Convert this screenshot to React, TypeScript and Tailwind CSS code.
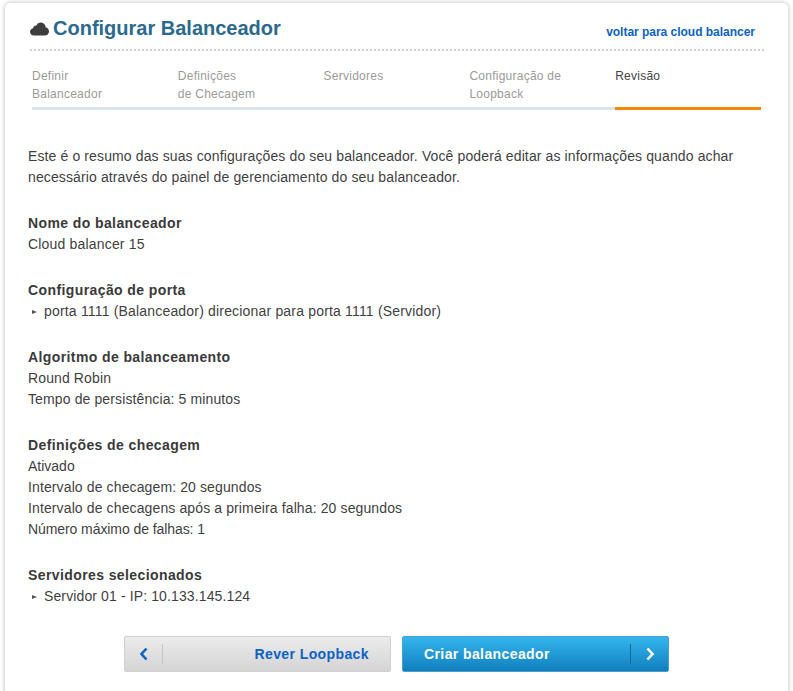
import React from "react";

const steps = [
  ["Definir", "Balanceador"],
  ["Definições", "de Checagem"],
  ["Servidores", ""],
  ["Configuração de", "Loopback"],
  ["Revisão", ""],
];

function Heading({ children }: { children: React.ReactNode }) {
  return <h2 className="font-bold text-[#3a3a3a] text-[14px] leading-[21px] tracking-[0.4px]">{children}</h2>;
}

function Bullet({ children }: { children: React.ReactNode }) {
  return (
    <div className="flex items-center">
      <span className="w-[16px] flex items-center pl-[4px]">
        <span className="block w-0 h-0 border-y-[2.5px] border-y-transparent border-l-[5px] border-l-[#555]" />
      </span>
      <span>{children}</span>
    </div>
  );
}

export default function App() {
  return (
    <div className="h-[691px] overflow-hidden bg-white font-['Liberation_Sans',Arial,sans-serif] text-[14px] leading-[21px] text-[#3f3f3f]">
      <div className="mx-[5px] mt-[3px] h-[720px] rounded-[5px] bg-white shadow-[0_0_5px_rgba(0,0,0,0.28)]">
        <div className="mx-[25px] flex h-[46px] items-center justify-between pr-[8px] pt-[3px]">
          <div className="flex items-center gap-[4px]">
            <svg width="19" height="15" viewBox="0 0 19 15" className="mt-[2px]">
              <path d="M4 14.5C1.8 14.5 0 12.9 0 10.8 0 9 1.3 7.6 3 7.2 3.3 5.4 4.800 4.200 6.400 4.400 7.300 2.600 9.100 1.400 11 1.500c2.600.1 4.600 2.200 4.700 4.800 1.900.4 3.300 2.100 3.300 4.100 0 2.300-1.800 4.100-4.100 4.100z" fill="#3d3d3d" />
            </svg>
            <h1 className="text-[20px] font-bold leading-[24px] text-[#2a6a8e]">Configurar Balanceador</h1>
          </div>
          <a className="mt-[9px] text-[12px] font-bold leading-[18px] tracking-[-0.02px] text-[#0b62c4]">voltar para cloud balancer</a>
        </div>
        <div className="mx-[25px] h-0 w-[734px] border-t-2 border-dotted border-[#cfcfcf]" />
        <div className="ml-[27px] mt-[16px] flex w-[729px]">
          {steps.map(([a, b], i) => (
            <div
              key={a}
              className={`flex-1 border-b-[3px] pb-[4px] text-[12px] leading-[18px] tracking-[0.25px] ${i === 4 ? "border-[#f8860d] text-[#444]" : "border-[#d9e6ee] text-[#9a9a9a]"}`}
            >
              <div>{a}</div>
              <div className="h-[18px]">{b}</div>
            </div>
          ))}
        </div>
        <div className="ml-[23px] mt-[36px] w-[745px] tracking-[0.12px]">
          <p>
            Este é o resumo das suas configurações do seu balanceador. Você poderá editar as informações quando achar
            <br />
            necessário através do painel de gerenciamento do seu balanceador.
          </p>
          <section className="mt-[25px]">
            <Heading>Nome do balanceador</Heading>
            <div className="tracking-[0.18px]">Cloud balancer 15</div>
          </section>
          <section className="mt-[25px]">
            <Heading>Configuração de porta</Heading>
            <div className="tracking-[0.18px]">
              <Bullet>porta 1111 (Balanceador) direcionar para porta 1111 (Servidor)</Bullet>
            </div>
          </section>
          <section className="mt-[25px]">
            <Heading>Algoritmo de balanceamento</Heading>
            <div>Round Robin</div>
            <div>Tempo de persistência: 5 minutos</div>
          </section>
          <section className="mt-[25px]">
            <Heading>Definições de checagem</Heading>
            <div className="tracking-normal">Ativado</div>
            <div>Intervalo de checagem: 20 segundos</div>
            <div>Intervalo de checagens após a primeira falha: 20 segundos</div>
            <div className="tracking-[-0.08px]">Número máximo de falhas: 1</div>
          </section>
          <section className="mt-[25px]">
            <Heading>Servidores selecionados</Heading>
            <Bullet>Servidor 01 - IP: 10.133.145.124</Bullet>
          </section>
        </div>
        <div className="ml-[119px] mt-[29px] flex gap-[11px]">
          <button className="flex h-[36px] w-[267px] items-center rounded-[2px] border border-[#d0d0d0] bg-gradient-to-b from-[#ececec] to-[#d4d4d4] font-bold tracking-[0.4px] text-[#0b62c4]">
            <span className="flex h-[20px] w-[38px] items-center justify-center border-r border-[#c4c4c4]">
              <svg width="10" height="14" viewBox="0 0 10 14"><path d="M7.500 1.500L2.500 7l5 5.500" fill="none" stroke="#0b62c4" strokeWidth="2.600" /></svg>
            </span>
            <span className="ml-auto pr-[21px]">Rever Loopback</span>
          </button>
          <button className="flex h-[36px] w-[267px] items-center rounded-[2px] border border-[#4a9fd0] bg-gradient-to-b from-[#33b5ee] to-[#1080bd] font-bold tracking-[0.4px] text-white">
            <span className="pl-[21px]">Criar balanceador</span>
            <span className="ml-auto flex h-[20px] w-[38px] items-center justify-center border-l border-[#106a9e]">
              <svg width="10" height="14" viewBox="0 0 10 14"><path d="M2.500 1.500L7.500 7l-5 5.500" fill="none" stroke="#fff" strokeWidth="2.600" /></svg>
            </span>
          </button>
        </div>
      </div>
    </div>
  );
}
